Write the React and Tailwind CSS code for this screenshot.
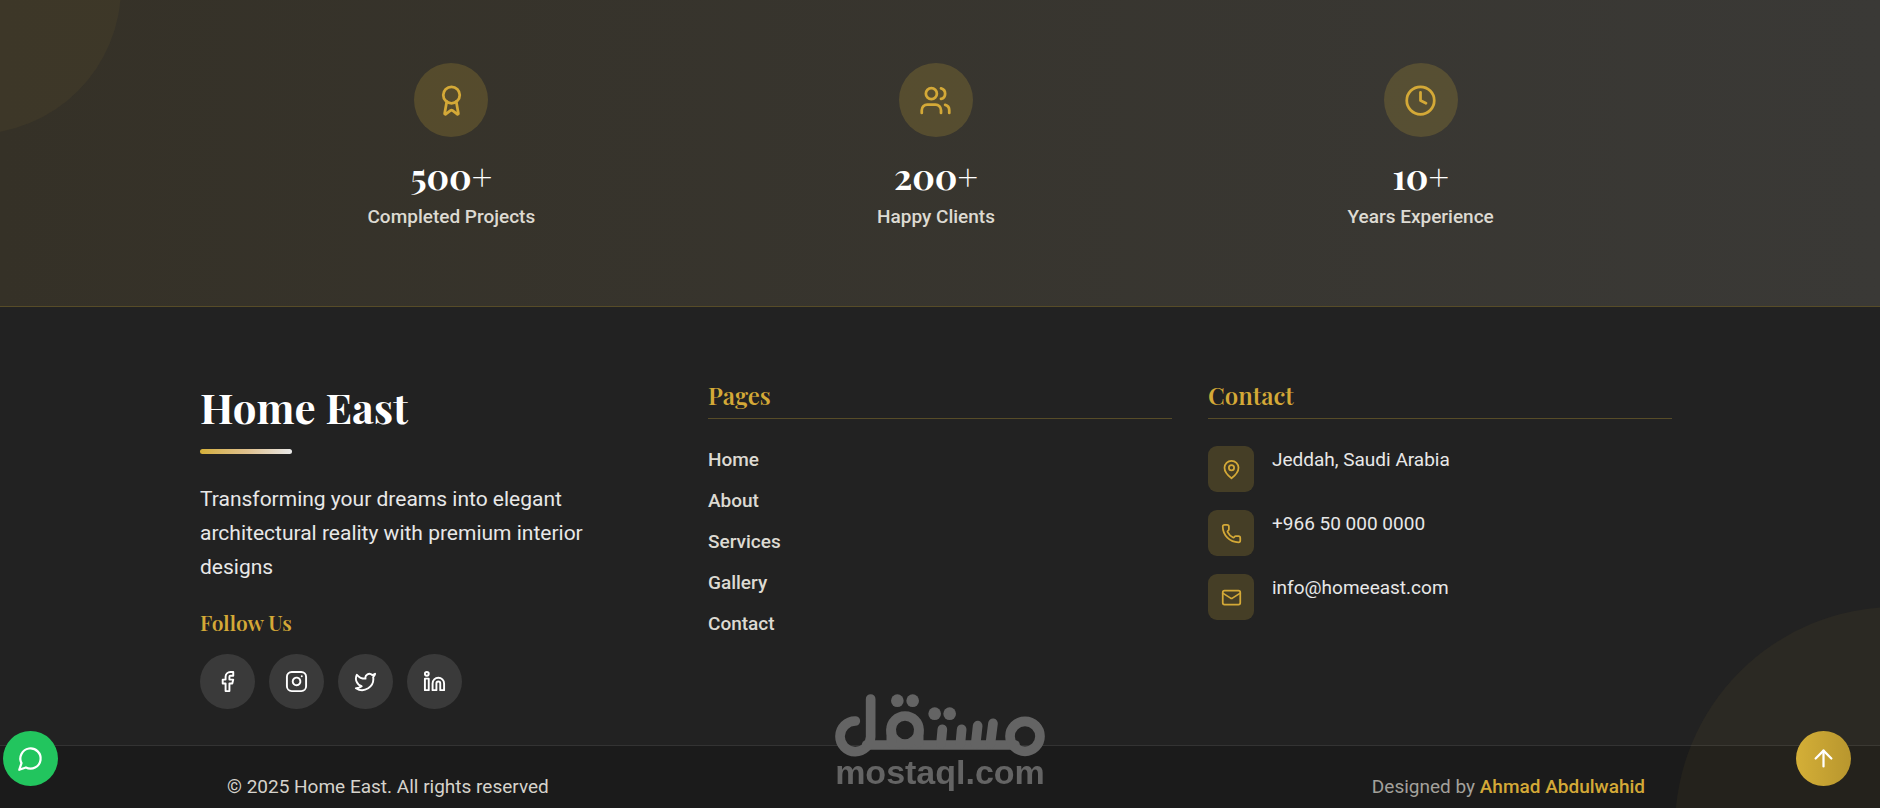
import {
  ArrowUp,
  Award,
  Clock,
  Facebook,
  Instagram,
  Linkedin,
  Mail,
  Phone,
  Twitter,
  Users
} from "lucide-react";

/* ================= ICONS ================= */
function PinIcon({ size }) {
  return (
    <svg width={size} height={size} viewBox="0 0 24 24" fill="none" stroke="currentColor" strokeWidth="2" strokeLinecap="round" strokeLinejoin="round">
      <path d="M20 10c0 6-8 12-8 12s-8-6-8-12a8 8 0 0 1 16 0Z" />
      <circle cx="12" cy="10" r="3" />
    </svg>
  );
}

function ChatIcon({ size }) {
  return (
    <svg width={size} height={size} viewBox="0 0 24 24" fill="none" stroke="currentColor" strokeWidth="2" strokeLinecap="round" strokeLinejoin="round">
      <path d="M7.9 20A9 9 0 1 0 4 16.1L2 22Z" />
    </svg>
  );
}

/* ================= DATA ================= */
const stats = [
  { icon: Award, value: "500", label: "Completed Projects" },
  { icon: Users, value: "200", label: "Happy Clients" },
  { icon: Clock, value: "10", label: "Years Experience" }
];

const pages = ["Home", "About", "Services", "Gallery", "Contact"];

const contacts = [
  { icon: PinIcon, text: "Jeddah, Saudi Arabia" },
  { icon: Phone, text: "+966 50 000 0000" },
  { icon: Mail, text: "info@homeeast.com" }
];

const socials = [
  { icon: Facebook, name: "Facebook" },
  { icon: Instagram, name: "Instagram" },
  { icon: Twitter, name: "Twitter" },
  { icon: Linkedin, name: "LinkedIn" }
];

/* ================= STATS ================= */
function Stats() {
  return (
    <section className="relative overflow-hidden bg-linear-to-r from-[#353127] to-[#3a3936] pt-[63px] pb-[75px] pr-2">
      <div className="absolute -top-[160px] -left-[173px] size-[294px] rounded-full bg-[#d4af37]/5" />
      <div className="relative max-w-[1472px] mx-auto px-[27px] grid grid-cols-3 gap-9">
        {stats.map(({ icon: Icon, value, label }) => (
          <div key={label} className="flex flex-col items-center">
            <div className="size-[74px] rounded-full bg-[#d4af37]/20 flex items-center justify-center text-[#d4a937]">
              <Icon size={33} />
            </div>
            <p className="mt-4 font-['Playfair_Display','Liberation_Serif',serif] text-[35px] leading-[46px] font-bold text-white">
              {value}<span className="font-normal">+</span>
            </p>
            <p className="mt-1 text-[19px] leading-7 font-medium text-[#dddad2]">{label}</p>
          </div>
        ))}
      </div>
    </section>
  );
}

/* ================= FOOTER ================= */
function ColumnTitle({ children }) {
  return (
    <h3 className="pb-[7px] mb-[27px] border-b border-[#d4af37]/30 font-['Playfair_Display','Liberation_Serif',serif] text-[24px] leading-8 font-semibold text-[#d4a937]">
      {children}
    </h3>
  );
}

function Footer() {
  return (
    <footer className="relative overflow-hidden bg-[#222222] border-t border-[#d4af37]/30">
      <div className="pr-2">
        <div className="max-w-[1472px] mx-auto pt-[72px] pb-9 grid grid-cols-[472fr_464fr_464fr] gap-9">
          {/* BRAND */}
          <div>
            <h2 className="font-['Playfair_Display','Liberation_Serif',serif] text-[42px] leading-[56px] font-bold text-white">Home East</h2>
            <div className="mt-3.5 w-[92px] h-[5px] rounded-full bg-linear-to-r from-[#d4af37] via-[#dfc08c] to-[#e8e8e8]" />
            <p className="mt-7 max-w-[412px] text-[21px] leading-[34px] text-[#e8e8e8]">
              Transforming your dreams into elegant architectural reality with premium interior designs
            </p>
            <h4 className="mt-[22px] font-['Playfair_Display','Liberation_Serif',serif] text-[21px] leading-8 font-semibold text-[#d4a937]">Follow Us</h4>
            <div className="mt-4 flex gap-3.5">
              {socials.map(({ icon: Icon, name }) => (
                <a key={name} href="#" aria-label={name} className="size-[55px] rounded-full bg-[#3a3a3a] flex items-center justify-center text-white hover:bg-[#d4af37]">
                  <Icon size={23} />
                </a>
              ))}
            </div>
          </div>
          {/* PAGES */}
          <nav>
            <ColumnTitle>Pages</ColumnTitle>
            <ul className="space-y-[13px] text-[19px] leading-7 font-medium text-[#dddad2]">
              {pages.map((page) => (
                <li key={page}>
                  <a href="#" className="hover:text-[#d4af37]">{page}</a>
                </li>
              ))}
            </ul>
          </nav>
          {/* CONTACT */}
          <div>
            <ColumnTitle>Contact</ColumnTitle>
            <ul className="space-y-[18px]">
              {contacts.map(({ icon: Icon, text }) => (
                <li key={text} className="flex gap-[18px]">
                  <span className="size-[46px] rounded-[9px] bg-[#d4af37]/20 flex items-center justify-center text-[#d4a937]">
                    <Icon size={21} />
                  </span>
                  <span className="text-[19px] leading-7 text-[#e8e8e8]">{text}</span>
                </li>
              ))}
            </ul>
          </div>
        </div>
      </div>
      {/* BOTTOM BAR */}
      <div className="bg-[#1b1b1b] border-t border-[#333333] pr-2">
        <div className="max-w-[1472px] mx-auto px-[27px] py-[27px] flex justify-between text-[19px] leading-7">
          <p className="text-[#d6d3cc]">© 2025 Home East. All rights reserved</p>
          <p className="text-[#a3a19c]">
            Designed by <a href="#" className="font-medium text-[#d4a937]">Ahmad Abdulwahid</a>
          </p>
        </div>
      </div>
      <div className="absolute bottom-0 -right-[237px] size-[442px] translate-y-1/2 rounded-full bg-[#d4af37]/5 pointer-events-none" />
    </footer>
  );
}

/* ================= WATERMARK ================= */
function Watermark() {
  return (
    <div className="fixed bottom-[21px] left-1/2 -translate-x-1/2 flex flex-col items-center text-[#646464] pointer-events-none">
      <svg width="210" height="63" viewBox="75 44 630 189" fill="none" stroke="currentColor" strokeWidth="29" strokeLinecap="round">
        <path d="M136 125A46 46 0 1 0 182 172V59" />
        <path d="M170 197H615" />
        <circle cx="285" cy="152" r="42" />
        <path d="M244 152V190M326 152V190" />
        <path d="M397 150L393 194M455 150L451 194M503 139L497 194M549 132L541 194" />
        <circle cx="645" cy="171" r="45" />
        <g fill="currentColor" stroke="none">
          <circle cx="262" cy="64" r="19" />
          <circle cx="308" cy="64" r="19" />
          <circle cx="374" cy="103" r="19" />
          <circle cx="419" cy="103" r="19" />
        </g>
      </svg>
      <span className="font-['Liberation_Sans',Arial,sans-serif] text-[34px] leading-[30px] font-bold">mostaql.com</span>
    </div>
  );
}

/* ================= PAGE ================= */
export default function App() {
  return (
    <div className="h-screen overflow-hidden bg-[#222222] font-[Roboto,sans-serif]">
      <Stats />
      <Footer />
      <Watermark />
      <button aria-label="Chat with us" className="fixed left-[3px] bottom-[22px] size-[55px] rounded-full bg-[#22c55e] flex items-center justify-center text-white">
        <ChatIcon size={27} />
      </button>
      <button aria-label="Back to top" className="fixed right-[29px] bottom-[22px] size-[55px] rounded-full bg-linear-to-r from-[#d4af37] to-[#b8962e] flex items-center justify-center text-white">
        <ArrowUp size={27} />
      </button>
    </div>
  );
}
